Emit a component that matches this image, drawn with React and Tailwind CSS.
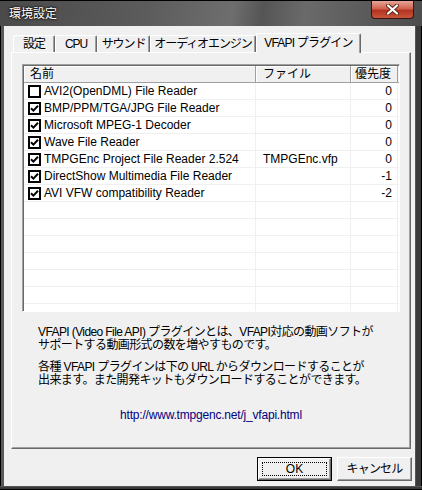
import React from "react";

const rows = [
  { name: "AVI2(OpenDML) File Reader", file: "", pri: "0", checked: false },
  { name: "BMP/PPM/TGA/JPG File Reader", file: "", pri: "0", checked: true },
  { name: "Microsoft MPEG-1 Decoder", file: "", pri: "0", checked: true },
  { name: "Wave File Reader", file: "", pri: "0", checked: true },
  { name: "TMPGEnc Project File Reader 2.524", file: "TMPGEnc.vfp", pri: "0", checked: true },
  { name: "DirectShow Multimedia File Reader", file: "", pri: "-1", checked: true },
  { name: "AVI VFW compatibility Reader", file: "", pri: "-2", checked: true },
];

const tabs = [
  { label: "設定", w: "w-[42px]" },
  { label: "CPU", w: "w-[42px]" },
  { label: "サウンド", w: "w-[53px]" },
  { label: "オーディオエンジン", w: "w-[106px]" },
];

function CheckBox({ checked }) {
  return (
    <div className="w-[13px] h-[13px] shrink-0 border-2 border-black bg-white flex items-center justify-center">
      {checked && (
        <svg width="9" height="9" viewBox="0 0 9 9">
          <path d="M1 4.2 L3.4 6.6 L8 1.8" stroke="#000" strokeWidth="2" fill="none" />
        </svg>
      )}
    </div>
  );
}

export default function App() {
  // pad the list out with empty rows so the grid lines run to the bottom
  const filler = Array.from({ length: 8 });

  return (
    <div className="w-[422px] h-[490px] bg-[#3e3e3e] flex flex-col overflow-hidden font-['Liberation_Sans','Noto_Sans_CJK_JP',sans-serif] text-[12px] text-black">
      {/* Title bar */}
      <div className="h-[26px] shrink-0 flex items-start justify-between border-t border-black bg-[linear-gradient(100deg,#4a4a4a_0%,#5c5c5c_35%,#6e6e6e_55%,#555_62%,#6a6a6a_72%,#4c4c4c_100%)]">
        <span className="pl-[9px] pt-[6px] text-white text-[12px] leading-[14px] [text-shadow:0_0_3px_#000,0_0_2px_#000]">
          環境設定
        </span>
        <div className="mr-[8px] w-[43px] h-[18px] rounded-b-[4px] border border-t-0 border-[#3a1510] bg-[linear-gradient(180deg,#e7a597_0%,#d0634f_45%,#b3331e_55%,#c8553b_100%)] flex items-center justify-center">
          <svg width="13" height="11" viewBox="0 0 13 11">
            <path d="M2 1.5 L11 9.5 M11 1.5 L2 9.5" stroke="#5a2418" strokeWidth="4" strokeLinecap="round" />
            <path d="M2 1.5 L11 9.5 M11 1.5 L2 9.5" stroke="#fff" strokeWidth="2.2" strokeLinecap="round" />
          </svg>
        </div>
      </div>

      <div className="flex flex-1">
        {/* left frame */}
        <div className="w-[4px] border-l border-black bg-[#5a5a5a]" />

        {/* Client area */}
        <div className="w-[411px] bg-[#f0f0f0] flex flex-col pt-[7px]">
          {/* Tabs */}
          <div className="flex items-end pl-[9px] h-[19px]">
            {tabs.map((t) => (
              <div
                key={t.label}
                className={`${t.w} h-[17px] border-t border-l border-white border-r border-r-[#696969] shadow-[inset_-1px_0_#a0a0a0] rounded-t-[2px] flex items-center justify-center leading-none whitespace-nowrap tracking-[-1.1px]`}
              >
                {t.label}
              </div>
            ))}
            <div className="relative z-10 -mb-px w-[105px] h-[20px] bg-[#f0f0f0] border-t border-l border-white border-r border-r-[#696969] shadow-[inset_-1px_0_#a0a0a0] rounded-t-[2px] flex items-center justify-center leading-none pb-[2px] whitespace-nowrap tracking-[-0.8px]">
              VFAPI プラグイン
            </div>
          </div>

          {/* Tab panel */}
          <div className="ml-[7px] w-[400px] h-[397px] border-t border-l border-white border-r border-b border-r-[#696969] border-b-[#696969] shadow-[inset_-1px_-1px_#a0a0a0] flex flex-col">
            {/* List */}
            <div className="ml-[10px] mt-[11px] w-[378px] h-[248px] border-t border-l border-[#a0a0a0] border-r border-b border-r-white border-b-white bg-white overflow-hidden">
              <div className="h-full border-t border-l border-[#696969] overflow-hidden">
                <div className="flex h-[17px] bg-[#f0f0f0] border-b border-[#a0a0a0]">
                  <div className="w-[232px] pl-[6px] border-r border-[#a0a0a0] shadow-[inset_1px_1px_#fff] flex items-center">名前</div>
                  <div className="w-[95px] pl-[7px] border-r border-[#a0a0a0] shadow-[inset_1px_1px_#fff] flex items-center">ファイル</div>
                  <div className="w-[47px] pl-[4px] border-r border-[#a0a0a0] shadow-[inset_1px_1px_#fff] flex items-center">優先度</div>
                </div>
                {rows.map((r) => (
                  <div key={r.name} className="flex h-[17px] border-b border-[#f0f0f0]">
                    <div className="w-[232px] pl-[4px] border-r border-[#f0f0f0] flex items-center gap-[3px] whitespace-nowrap overflow-hidden">
                      <CheckBox checked={r.checked} />
                      <span>{r.name}</span>
                    </div>
                    <div className="w-[95px] pl-[7px] border-r border-[#f0f0f0] flex items-center whitespace-nowrap">{r.file}</div>
                    <div className="w-[47px] pr-[5px] border-r border-[#f0f0f0] flex items-center justify-end">{r.pri}</div>
                  </div>
                ))}
                {filler.map((_, i) => (
                  <div key={i} className="flex h-[17px] border-b border-[#f0f0f0]">
                    <div className="w-[232px] border-r border-[#f0f0f0]" />
                    <div className="w-[95px] border-r border-[#f0f0f0]" />
                    <div className="w-[47px] border-r border-[#f0f0f0]" />
                  </div>
                ))}
              </div>
            </div>

            {/* Description */}
            <div className="pl-[26px] mt-[14px] leading-[13px] whitespace-nowrap tracking-[-0.6px]">
              <p>VFAPI (Video File API) プラグインとは、VFAPI対応の動画ソフトが</p>
              <p>サポートする動画形式の数を増やすものです。</p>
              <p className="mt-[9px]">各種 VFAPI プラグインは下の URL からダウンロードすることが</p>
              <p>出来ます。また開発キットもダウンロードすることができます。</p>
            </div>
            <p className="mt-[22px] text-center text-[#000080] leading-[13px] tracking-[-0.2px]">
              http://www.tmpgenc.net/j_vfapi.html
            </p>
          </div>

          {/* Buttons */}
          <div className="flex justify-end gap-[5px] pr-[3px] mt-[8px]">
            <button className="w-[75px] h-[24px] border border-black bg-[#f0f0f0] p-0">
              <div className="h-full border-t border-l border-white border-r border-b border-r-[#696969] border-b-[#696969] shadow-[inset_-1px_-1px_#a0a0a0] p-[3px]">
                <div className="h-full border border-dotted border-black flex items-center justify-center leading-none">OK</div>
              </div>
            </button>
            <button className="w-[75px] h-[24px] border-t border-l border-white border-r border-b border-r-[#696969] border-b-[#696969] shadow-[inset_-1px_-1px_#a0a0a0] bg-[#f0f0f0] flex items-center justify-center leading-none tracking-[-0.8px]">
              キャンセル
            </button>
          </div>
        </div>

        {/* right frame */}
        <div className="flex-1 bg-[#3a3a3a] border-l border-[#555] border-r border-r-black" />
      </div>

      {/* bottom frame */}
      <div className="h-[4px] shrink-0 bg-[#3a3a3a] border-t border-[#555] border-b border-b-black" />
    </div>
  );
}
